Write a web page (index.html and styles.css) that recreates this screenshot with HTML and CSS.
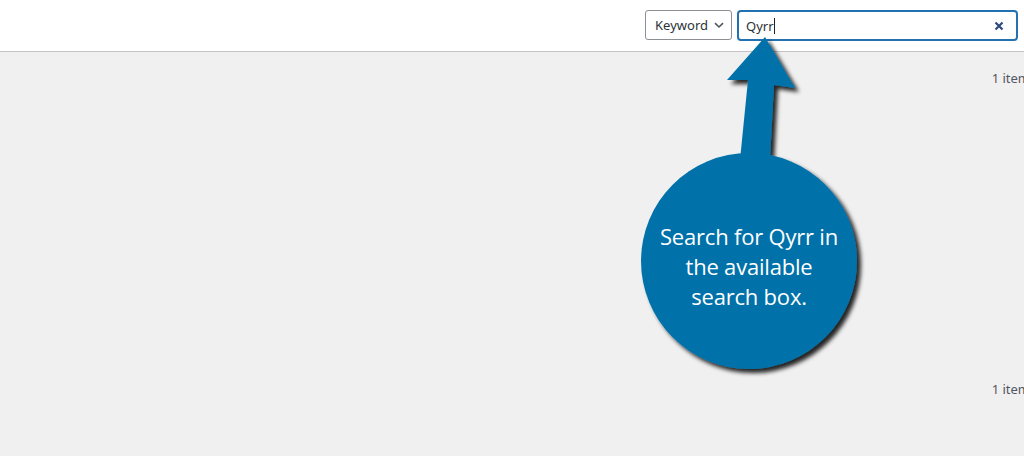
FILE: index.html
```html
<!DOCTYPE html>
<html lang="en">
<head>
  <meta charset="UTF-8">
  <title>Add Plugins</title>
  <link rel="stylesheet" href="styles.css">
</head>
<body>
  <div id="page">
    <div class="top-bar">
      <div class="search-form">
        <div class="type-select">
          <span>Keyword</span>
          <svg class="chevron" width="12" height="12" viewBox="0 0 12 12"><path d="M2 4.2 L6 8 L10 4.2" fill="none" stroke="#50575e" stroke-width="1.6"/></svg>
        </div>
        <div class="search-input">
          <span class="search-text">Qyrr</span><span class="caret"></span>
          <svg class="clear" width="10" height="10" viewBox="0 0 10 10"><path d="M1.5 1.5 L8.5 8.5 M8.5 1.5 L1.5 8.5" stroke="#2c4a7a" stroke-width="2.2"/></svg>
        </div>
      </div>
    </div>

    <div class="content">
      <div class="tablenav">1 item</div>
      <div class="results"></div>
      <div class="tablenav">1 item</div>
    </div>

    <!-- annotation callout -->
    <div class="callout">
      <svg class="callout-shape" width="260" height="360" viewBox="0 0 260 360">
        <defs>
          <filter id="shadow" x="-20%" y="-20%" width="140%" height="140%">
            <feGaussianBlur in="SourceAlpha" stdDeviation="2"/>
            <feOffset dx="4" dy="4" result="blur"/>
            <feFlood flood-color="#000" flood-opacity="0.85"/>
            <feComposite in2="blur" operator="in"/>
            <feMerge><feMergeNode/><feMergeNode in="SourceGraphic"/></feMerge>
          </filter>
        </defs>
        <g filter="url(#shadow)" fill="#0071a9">
          <path d="M135 7 L165 58 L144 55 L140 130 L110 130 L118 50 L97 50 Z"/>
          <circle cx="119" cy="231" r="108"/>
        </g>
      </svg>
      <div class="callout-text">Search for Qyrr in<br>the available<br>search box.</div>
    </div>
  </div>
</body>
</html>
```

FILE: styles.css
```css
html, body {
  margin: 0;
  padding: 0;
  font-family: "Noto Sans", "Open Sans", sans-serif;
  font-size: 13px;
  color: #2c3338;
  background-color: #f0f0f1;
  overflow: hidden;
}

#page {
  position: relative;
  width: 1024px;
  height: 456px;
  overflow: hidden;
}

.top-bar {
  height: 52px;
  background-color: #fff;
  border-bottom: 1px solid #c3c4c7;
  box-sizing: border-box;
  display: flex;
  justify-content: flex-end;
  align-items: flex-start;
  padding: 10px 6px 0 0;
}

.search-form {
  display: flex;
  gap: 5px;
}

.type-select {
  height: 30px;
  box-sizing: border-box;
  border: 1px solid #8c8f94;
  border-radius: 3px;
  display: flex;
  align-items: center;
  gap: 5px;
  padding: 0 6px 0 9px;
  color: #2c3338;
}

.search-input {
  width: 281px;
  height: 31px;
  box-sizing: border-box;
  border: 2px solid #2271b1;
  border-radius: 4px;
  display: flex;
  align-items: center;
  padding: 0 12px 0 7px;
}

.search-text {
  color: #2c3338;
  font-size: 13px;
}

.caret {
  width: 1px;
  height: 16px;
  background-color: #1d2327;
}

.clear {
  margin-left: auto;
}

.content {
  display: flex;
  flex-direction: column;
  padding: 17px 0 0 0;
}

.tablenav {
  align-self: flex-end;
  margin-right: -6px;
  white-space: nowrap;
  color: #50575e;
  line-height: 18px;
}

.results {
  height: 293px;
}

.callout {
  position: absolute;
  left: 630px;
  top: 30px;
  width: 260px;
  height: 360px;
}

.callout-shape {
  display: block;
}

.callout-text {
  position: absolute;
  left: 10px;
  top: 191px;
  width: 218px;
  text-align: center;
  color: #fff;
  font-family: "Open Sans", sans-serif;
  font-size: 22px;
  line-height: 30px;
  letter-spacing: -0.2px;
}
```
